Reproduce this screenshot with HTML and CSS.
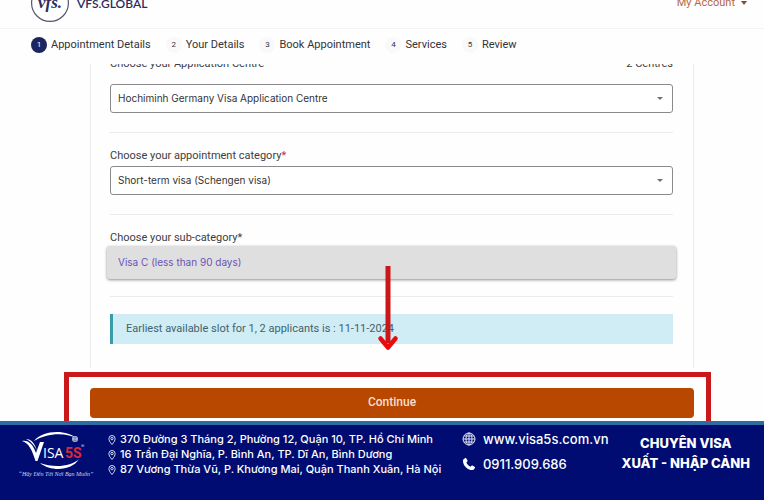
FILE: index.html
```html
<!DOCTYPE html>
<html lang="en">
<head>
<meta charset="utf-8">
<title>Appointment Details</title>
<link rel="stylesheet" href="styles.css">
</head>
<body>
<header class="topbar">
  <div class="topbar-inner">
    <a class="brand" href="#">
      <svg class="brand-mark" viewBox="0 0 40 40" aria-hidden="true">
        <circle cx="20" cy="20" r="18.4"/>
        <text x="20" y="25" text-anchor="middle">vfs.</text>
      </svg>
      <span>VFS.GLOBAL</span>
    </a>
    <button class="account" type="button">My Account
      <svg class="account-caret" viewBox="0 0 6 4" aria-hidden="true"><path d="M0 0h6L3 4z"/></svg>
    </button>
  </div>
</header>
<ol class="steps">
  <li class="step step-active"><span class="num">1</span>Appointment Details</li>
  <li class="step"><span class="num">2</span>Your Details</li>
  <li class="step"><span class="num">3</span>Book Appointment</li>
  <li class="step"><span class="num">4</span>Services</li>
  <li class="step"><span class="num">5</span>Review</li>
</ol>
<main class="content">
  <section class="card">
    <div class="field field-centre">
      <div class="label-row"><label for="centre">Choose your Application Centre</label><span>2 Centres</span></div>
      <select id="centre"><option>Hochiminh Germany Visa Application Centre</option></select>
    </div>
    <div class="field">
      <label for="category">Choose your appointment category<span class="required">*</span></label>
      <select id="category"><option>Short-term visa (Schengen visa)</option></select>
    </div>
    <div class="field">
      <label for="subcategory">Choose your sub-category<span>*</span></label>
      <select id="subcategory" class="picked"><option>Visa C (less than 90 days)</option></select>
    </div>
    <p class="notice">Earliest available slot for 1, 2 applicants is : 11-11-2024</p>
    <svg class="arrow" viewBox="0 0 22 86" aria-hidden="true">
      <path class="arrow-shaft" d="M11 1V78"/>
      <path class="arrow-head" d="M3.5 73.5 11 82.5 18.5 73.5"/>
    </svg>
  </section>
  <div class="action"><button class="continue" type="button">Continue</button></div>
</main>
<footer class="banner">
  <svg class="visa-logo" viewBox="0 0 76 50" role="img" aria-label="Visa5s">
    <path class="swoosh" d="M14 10C23 -1 46 -2 58 8 46 1 27 2 14 10z"/>
    <path class="swoosh" d="M20 32C31 41 52 40 59 28 51 36 33 37 20 32z"/>
    <path class="wing" d="M2 10C9 9 13 14 16 22L20 11h4L17.500 30h-2C12 19 9 12 2 10z"/>
    <path class="wing" d="M6 8c6 0 9 5 11 12C14 13 10 10 6 8z"/>
    <text class="logo-isa" x="23" y="27">ISA</text>
    <text class="logo-5s" x="45" y="27">5S</text>
    <text class="logo-reg" x="61" y="17">®</text>
    <circle class="logo-globe" cx="55" cy="8" r="3"/>
    <path class="logo-grid" d="M52 8h6M55 5v6M53 6.500h4M53 9.500h4"/>
    <text class="slogan" x="36" y="45" text-anchor="middle">“Hãy Đến Tới Nơi Bạn Muốn”</text>
  </svg>
  <ul class="places">
    <li><svg viewBox="0 0 10 12" aria-hidden="true"><path d="M5 10.500C2.800 8 1.900 6.300 1.900 4.600a3.100 3.100 0 0 1 6.200 0C8.100 6.300 7.200 8 5 10.500z"/><circle cx="5" cy="4.600" r="1.200"/></svg>370 Đường 3 Tháng 2, Phường 12, Quận 10, TP. Hồ Chí Minh</li>
    <li><svg viewBox="0 0 10 12" aria-hidden="true"><path d="M5 10.500C2.800 8 1.900 6.300 1.900 4.600a3.100 3.100 0 0 1 6.200 0C8.100 6.300 7.200 8 5 10.500z"/><circle cx="5" cy="4.600" r="1.200"/></svg>16 Trần Đại Nghĩa, P. Bình An, TP. Dĩ An, Bình Dương</li>
    <li><svg viewBox="0 0 10 12" aria-hidden="true"><path d="M5 10.500C2.800 8 1.900 6.300 1.900 4.600a3.100 3.100 0 0 1 6.200 0C8.100 6.300 7.200 8 5 10.500z"/><circle cx="5" cy="4.600" r="1.200"/></svg>87 Vương Thừa Vũ, P. Khương Mai, Quận Thanh Xuân, Hà Nội</li>
  </ul>
  <ul class="contacts">
    <li><svg class="globe" viewBox="0 0 14 14" aria-hidden="true"><circle cx="7" cy="7" r="6"/><ellipse cx="7" cy="7" rx="3" ry="6"/><path d="M7 1v12M1 7h12M2 4h10M2 10h10"/></svg><a href="#">www.visa5s.com.vn</a></li>
    <li><svg class="phone" viewBox="0 0 14 14" aria-hidden="true"><path d="M1.300 2.500 3.200 1Q3.800.7 4.200 1.300L5.500 3.600Q5.800 4.200 5.300 4.600L4.400 5.400C5 7.200 6.700 8.900 8.600 9.700L9.400 8.800Q9.800 8.300 10.500 8.600L12.800 10Q13.300 10.400 12.900 11L11.500 12.800C6.500 14.500-.5 7.500 1.300 2.500z"/></svg><a href="#">0911.909.686</a></li>
  </ul>
  <p class="tagline">CHUYÊN VISA<br>XUẤT - NHẬP CẢNH</p>
</footer>
</body>
</html>
```
FILE: styles.css
```css
* { box-sizing: border-box; }
body {
  margin: 0;
  height: 100vh;
  display: flex;
  flex-direction: column;
  overflow: hidden;
  background: #fefefe;
  color: #3d3d42;
  font: 11px/16px Roboto, sans-serif;
}
ul, ol { list-style: none; margin: 0; padding: 0; }
a { color: inherit; text-decoration: none; }
select, button { font: inherit; }

/* Top bar, scrolled partly out of view */
.topbar {
  flex: none;
  height: 29px;
  display: flex;
  align-items: flex-end;
  overflow: hidden;
  border-bottom: 1px solid #f3f3f3;
}
.topbar-inner {
  flex: 1;
  height: 50px;
  display: flex;
  align-items: center;
  justify-content: space-between;
  padding: 0 17px 0 30px;
}
.brand {
  display: flex;
  align-items: center;
  gap: 7px;
  color: #2b2c5c;
  font: 600 12px/16px Lato, sans-serif;
}
.brand span { padding-top: 2px; }
.brand-mark { width: 40px; height: 40px; }
.brand-mark circle { fill: #fff; stroke: #55566c; stroke-width: 1.2; }
.brand-mark text { font: italic bold 17px "Liberation Serif", serif; fill: #2b2c5c; }
.account {
  display: flex;
  align-items: center;
  gap: 6px;
  padding: 0;
  border: 0;
  background: none;
  color: #b5663f;
}
.account-caret { width: 6px; height: 4px; fill: #8a4b2c; }

.steps {
  flex: none;
  display: flex;
  gap: 15px;
  padding: 7px 31px 10px;
  color: #333338;
  line-height: 18px;
}
.step { display: flex; align-items: center; gap: 4px; }
.num {
  width: 16px;
  height: 16px;
  border-radius: 50%;
  background: #f9f9f9;
  font-size: 8px;
  line-height: 16px;
  text-align: center;
}
.step-active .num { background: #1c2560; color: #fff; }

.content {
  flex: 1;
  min-height: 0;
  overflow: hidden;
  padding: 0 70px 0 90px;
}
.card {
  position: relative;
  margin-top: -9px;
  padding: 0 20px 24px 19px;
  border: solid #ececee;
  border-width: 0 1px;
}
.field {
  display: flex;
  flex-direction: column;
  gap: 1px;
  padding-bottom: 19px;
  margin-bottom: 14px;
  border-bottom: 1px solid #ebebed;
  line-height: 18px;
}
.field-centre { gap: 11px; }
.label-row { display: flex; justify-content: space-between; }
.required { color: #c22b35; }
.field select {
  height: 29px;
  padding: 0 7px 2px;
  border: 1px solid #8a8a8e;
  border-radius: 3px;
  appearance: none;
  background: #fff url("data:image/svg+xml,%3Csvg xmlns='http://www.w3.org/2000/svg' viewBox='0 0 6 3'%3E%3Cpath d='M0 0h6L3 3z' fill='%23707074'/%3E%3C/svg%3E") no-repeat right 9px center / 6px 3px;
  color: #333337;
  font: 10px/16px Inter, sans-serif;
}
.field .picked {
  height: 33px;
  margin: -2px -3px;
  padding: 0 11px 2px;
  border: 0;
  background: #dfdfdf;
  color: #6a55b5;
  box-shadow: 0 1px 3px #8c8c8c;
}
.notice {
  margin: 17px 0 0;
  padding: 7px 13px;
  border-left: 3px solid #3a9cab;
  background: #d0edf5;
  color: #3f626c;
}
/* Red marks pointing at the Continue button */
.arrow {
  position: absolute;
  left: calc(50% - 15px);
  bottom: 17px;
  width: 22px;
  height: 86px;
  fill: none;
}
.arrow-shaft { stroke: #cc1719; stroke-width: 5; }
.arrow-head { stroke: #e90c0e; stroke-width: 4.5; stroke-linecap: round; stroke-linejoin: round; }
.action { position: relative; margin-top: 20px; }
.action::before {
  content: "";
  position: absolute;
  inset: -16px -17px -20px -26px;
  border: 5px solid #c9191b;
}
.continue {
  position: relative;
  display: block;
  width: 100%;
  height: 30px;
  padding: 0 0 2px;
  border: 0;
  border-radius: 4px;
  background: #b84700;
  color: #f9dfcf;
  font-size: 12px;
  font-weight: 500;
}

.banner {
  flex: none;
  display: flex;
  align-items: flex-start;
  padding: 6px 14px 19px 20px;
  border-top: 4px solid #2a6ca3;
  background: #000c72;
  color: #fff;
}
.visa-logo { flex: none; width: 76px; height: 50px; overflow: visible; }
.swoosh, .wing { fill: #fff; }
.logo-isa { font: 14px "Open Sans", sans-serif; fill: #fff; }
.logo-5s { font: bold 14px "Liberation Sans Narrow", Roboto, sans-serif; fill: #dc2838; }
.logo-reg { font: 5px Inter, sans-serif; fill: #c9cce0; }
.logo-globe { fill: #c3cbe8; }
.logo-grid { fill: none; stroke: #4a5aa5; stroke-width: .5; }
.slogan { font: italic 6px "Liberation Serif", serif; fill: #cfd2ea; }
.places {
  margin: 1px 0 0 11px;
  font: 500 11px/15px Inter, sans-serif;
  white-space: nowrap;
}
.places li { display: flex; align-items: center; gap: 3px; }
.places svg { width: 10px; height: 12px; fill: none; stroke: #d5d8ef; }
.contacts {
  display: flex;
  flex-direction: column;
  gap: 9px;
  margin-left: auto;
  font: 500 13px/16px Inter, sans-serif;
}
.contacts li { display: flex; align-items: center; gap: 7px; }
.contacts svg { width: 14px; height: 14px; }
.globe { fill: none; stroke: #dfe2f4; }
.phone { fill: #fff; }
.tagline {
  margin: 2px 0 0 13px;
  font: 800 13px/20px Inter, sans-serif;
  text-align: center;
  white-space: nowrap;
}
```
